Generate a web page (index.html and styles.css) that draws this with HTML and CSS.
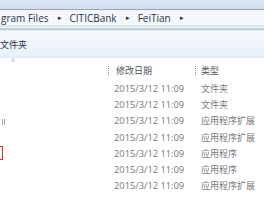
FILE: index.html
```html
<!DOCTYPE html>
<html>
<head>
<meta charset="utf-8">
<link rel="stylesheet" href="styles.css">
</head>
<body>
<div class="window">
  <div class="titleband"></div>
  <div class="addr">
    <span class="crumb first">gram Files</span><span class="arrow">▸</span>
    <span class="crumb">CITICBank</span><span class="arrow">▸</span>
    <span class="crumb">FeiTian</span><span class="arrow">▸</span>
  </div>
  <div class="gap"></div>
  <div class="toolbar"><span class="tool">文件夹</span></div>
  <div class="content">
    <div class="side">
      <div class="caret">^</div>
      <div class="grip"></div>
      <div class="redbox"></div>
    </div>
    <div class="list">
      <div class="head">
        <div class="hcell date"><span class="dots"></span>修改日期</div>
        <div class="hcell type"><span class="dots"></span>类型</div>
      </div>
      <div class="row"><span class="date">2015/3/12 11:09</span><span class="type">文件夹</span></div>
      <div class="row"><span class="date">2015/3/12 11:09</span><span class="type">文件夹</span></div>
      <div class="row"><span class="date">2015/3/12 11:09</span><span class="type">应用程序扩展</span></div>
      <div class="row"><span class="date">2015/3/12 11:09</span><span class="type">应用程序扩展</span></div>
      <div class="row"><span class="date">2015/3/12 11:09</span><span class="type">应用程序</span></div>
      <div class="row"><span class="date">2015/3/12 11:09</span><span class="type">应用程序</span></div>
      <div class="row"><span class="date">2015/3/12 11:09</span><span class="type">应用程序扩展</span></div>
    </div>
  </div>
</div>
</body>
</html>
```
FILE: styles.css
```css
html, body { margin: 0; padding: 0; background: #ffffff; }
body { width: 264px; height: 200px; overflow: hidden; font-family: "Open Sans", "Noto Sans CJK SC", sans-serif; }
.window { width: 264px; height: 200px; display: flex; flex-direction: column; }
.titleband { height: 9px; background: linear-gradient(#d9e6f3, #cfdeee); border-bottom: 1px solid #9ea6b2; flex: none; }
.addr { height: 15px; background: #f4f7fb; display: flex; align-items: center; font-size: 10px; color: #2a3646; white-space: nowrap; flex: none; }
.crumb.first { margin-left: 1px; }
.arrow { font-size: 7px; color: #1e2a3a; margin: 0 8px 0 9px; }
.gap { height: 6px; flex: none; background: linear-gradient(#dbe6f1 0, #dbe6f1 2px, #f2f5f9 2px, #f2f5f9 3px, #c6ccd6 3px, #c6ccd6 5px, #dfe7f1 5px); }
.toolbar { height: 26px; background: linear-gradient(#f4f8fc, #e9f0f8); border-bottom: 1px solid #dfe7f0; display: flex; align-items: center; font-size: 9px; color: #2a3646; flex: none; }
.tool { margin-left: 0; font-family: "Noto Sans CJK SC", sans-serif; }
.content { flex: 1; display: flex; }
.side { width: 108px; flex: none; position: relative; }
.caret { font-size: 7px; color: #8a96a6; margin: 0 0 0 11px; line-height: 8px; height: 8px; }
.grip { position: absolute; left: 2px; top: 61px; width: 3px; height: 6px; border-left: 1px solid #a0a4ac; border-right: 1px solid #a0a4ac; box-sizing: border-box; }
.redbox { position: absolute; left: -10px; top: 88px; width: 13px; height: 14px; border: 1.5px solid #cf2c3c; box-sizing: border-box; }
.list { flex: 1; padding-top: 5px; }
.head { display: flex; height: 14px; align-items: center; font-family: "Noto Sans CJK SC", sans-serif; font-size: 9px; color: #4d5560; }
.hcell { display: flex; align-items: center; }
.hcell.date { width: 87px; }
.dots { width: 1px; height: 9px; margin-right: 7px; background: repeating-linear-gradient(#8a8f98 0, #8a8f98 1px, transparent 1px, transparent 2px); }
.head .hcell.type .dots { margin-right: 5px; }
.row { display: flex; height: 16.3px; align-items: center; font-size: 9.3px; color: #74787e; }
.head + .row { margin-top: 3px; }
.row .date { width: 87px; padding-left: 6px; box-sizing: border-box; }
.row .type { padding-left: 6px; font-family: "Noto Sans CJK SC", sans-serif; font-size: 9px; }
```
